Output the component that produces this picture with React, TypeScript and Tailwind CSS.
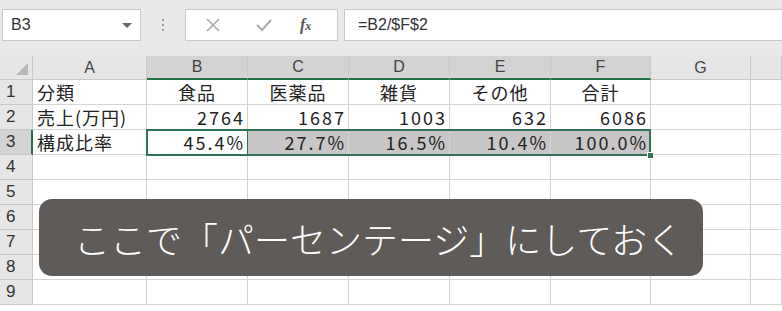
const cols = ["A", "B", "C", "D", "E", "F", "G", ""];
const widths = "grid-cols-[33px_114px_101px_101px_101px_101px_100px_100px_1fr]";

const rows: string[][] = [
  ["分類", "食品", "医薬品", "雑貨", "その他", "合計", "", ""],
  ["売上(万円)", "2764", "1687", "1003", "632", "6086", "", ""],
  ["構成比率", "45.4%", "27.7%", "16.5%", "10.4%", "100.0%", "", ""],
  ["", "", "", "", "", "", "", ""],
  ["", "", "", "", "", "", "", ""],
  ["", "", "", "", "", "", "", ""],
  ["", "", "", "", "", "", "", ""],
  ["", "", "", "", "", "", "", ""],
  ["", "", "", "", "", "", "", ""],
];

const font = { fontFamily: '"Noto Sans CJK JP", "Liberation Sans", sans-serif' };
const latin = { fontFamily: '"Liberation Sans", sans-serif' };

const App = () => {
  return (
    <div className="relative w-[782px] h-[311px] overflow-hidden bg-white text-[#222]" style={font}>
      {/* formula bar */}
      <div className="h-[56px] bg-[#e9e9e9] flex items-start pt-[9px] pl-[2px]">
        <div className="w-[139px] h-[32px] bg-white border border-[#c9c9c9] flex items-center justify-between pl-[8px] pr-[8px]">
          <span className="text-[16px] text-[#333]" style={latin}>B3</span>
          <span className="w-0 h-0 border-l-[5px] border-r-[5px] border-t-[5px] border-l-transparent border-r-transparent border-t-[#666]" />
        </div>
        <div className="w-[44px] h-[32px] flex flex-col items-center justify-center gap-[3px]">
          <span className="w-[2px] h-[2px] bg-[#999]" />
          <span className="w-[2px] h-[2px] bg-[#999]" />
          <span className="w-[2px] h-[2px] bg-[#999]" />
        </div>
        <div className="w-[153px] h-[32px] bg-white border border-[#c9c9c9] flex items-center">
          <svg width="16" height="16" viewBox="0 0 16 16" className="ml-[19px]">
            <path d="M2 2 L14 14 M14 2 L2 14" stroke="#aaa" strokeWidth="1.6" fill="none" />
          </svg>
          <svg width="18" height="16" viewBox="0 0 18 16" className="ml-[34px]">
            <path d="M2 8 L7 13 L16 3" stroke="#aaa" strokeWidth="2" fill="none" />
          </svg>
          <span className="ml-[27px] text-[16px] italic font-bold text-[#555]" style={{ fontFamily: '"Liberation Serif", serif' }}>
            f<span className="text-[12px]">x</span>
          </span>
        </div>
        <div className="ml-[6px] flex-1 h-[32px] bg-white border border-[#c9c9c9] border-r-0 flex items-center pl-[13px]">
          <span className="text-[16px] text-[#333]" style={latin}>=B2/$F$2</span>
        </div>
      </div>

      {/* sheet */}
      <div className={`grid ${widths} grid-rows-[24px_repeat(9,25px)]`}>
        <div className="bg-[#e6e6e6] border-r border-b border-[#c8c8c8] relative">
          <svg className="absolute right-[4px] bottom-[4px]" width="12" height="12" viewBox="0 0 12 12">
            <path d="M12 0 L12 12 L0 12 Z" fill="#b8b8b8" />
          </svg>
        </div>
        {cols.map((c, i) => {
          const sel = i >= 1 && i <= 5;
          return (
            <div
              key={c + i}
              className={`flex items-center justify-center text-[16px] text-[#444] border-r border-r-[#c8c8c8] ${
                sel ? "bg-[#d3d3d3] border-b-2 border-b-[#217346]" : "bg-[#e6e6e6] border-b border-b-[#c8c8c8]"
              }`}
              style={latin}
            >
              {c}
            </div>
          );
        })}

        {rows.map((r, ri) => {
          const selRow = ri === 2;
          return (
            <div key={ri} className="contents">
              <div
                className={`flex items-center pl-[6px] text-[17px] text-[#333] border-b border-b-[#c8c8c8] ${
                  selRow ? "bg-[#d3d3d3] border-r-2 border-r-[#217346]" : "bg-[#e6e6e6] border-r border-r-[#c8c8c8]"
                }`}
                style={latin}
              >
                {ri + 1}
              </div>
              {r.map((v, ci) => {
                const isNum = ri > 0 && ci >= 1 && ci <= 5;
                const isHead = ri === 0 && ci >= 1;
                const shade = selRow && ci >= 2 && ci <= 5;
                return (
                  <div
                    key={ci}
                    className={`flex items-center border-r border-b border-[#d4d4d4] text-[18px] leading-none whitespace-nowrap ${
                      isNum ? "justify-end pr-[2px] tracking-[2px]" : isHead ? "justify-center tracking-[1px]" : "pl-[4px] tracking-[1px]"
                    } ${shade ? "bg-[#c8c6c6]" : "bg-white"}`}
                  >
                    {v}
                  </div>
                );
              })}
            </div>
          );
        })}
      </div>

      {/* selection outline */}
      <div className="absolute left-[146px] top-[129px] w-[505px] h-[27px] border-2 border-[#2f7355] pointer-events-none" />
      <div className="absolute left-[147px] top-[130px] w-[101px] h-[25px] border border-[#2f7355] pointer-events-none" />
      <div className="absolute left-[647px] top-[152px] w-[7px] h-[7px] bg-[#2f7355] border border-white" />

      {/* caption */}
      <div className="absolute left-[39px] top-[199px] w-[664px] h-[77px] rounded-[13px] bg-[#5f5b58] flex items-center pl-[35px]">
        <span className="text-white text-[36px] font-light leading-none whitespace-nowrap">
          ここで「パーセンテージ」にしておく
        </span>
      </div>
    </div>
  );
};

export default App;
